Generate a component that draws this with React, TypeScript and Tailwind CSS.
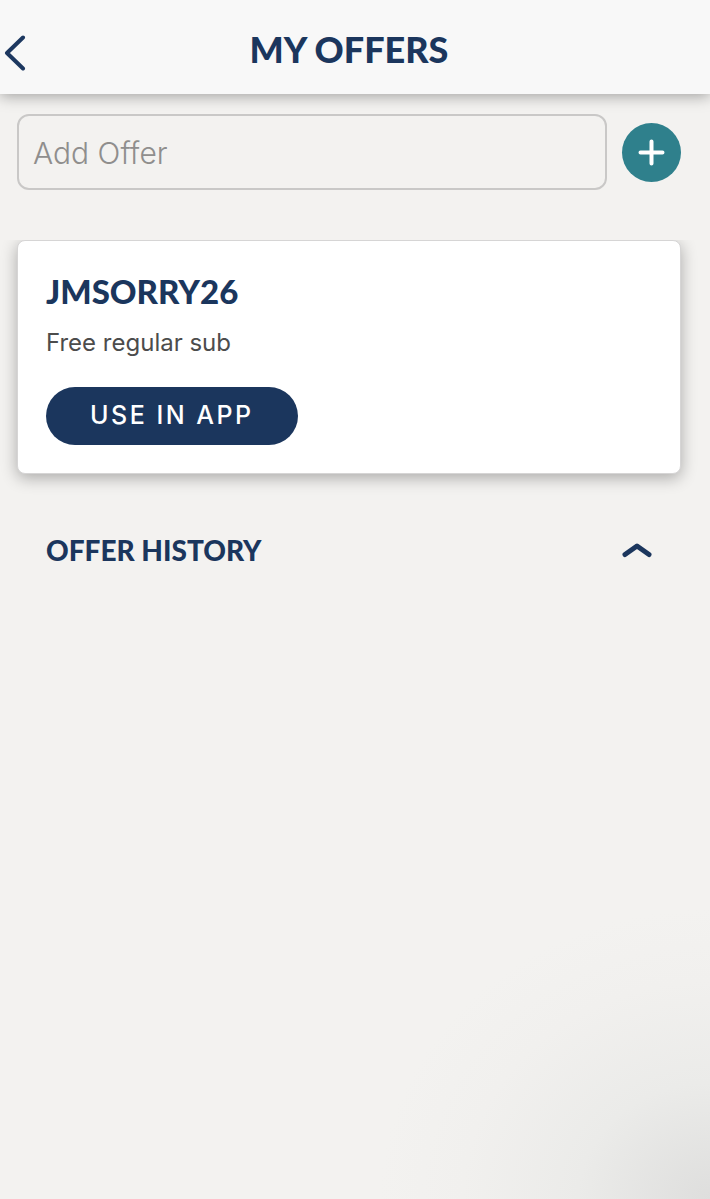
import React, { useState } from 'react';

type Offer = {
  code: string;
  description: string;
};

const offers: Offer[] = [{ code: 'JMSORRY26', description: 'Free regular sub' }];

const Header: React.FC = () => (
  <header className="relative grid h-[94px] grid-cols-[1fr_auto_1fr] items-center bg-[#f8f8f8] pt-3 pr-3 shadow-[0_2px_14px_rgba(0,0,0,0.35)]">
    <button type="button" aria-label="Back" className="justify-self-start pl-1">
      <svg viewBox="0 0 24 36" className="h-9 w-6" fill="none" stroke="#1d3860" strokeWidth="4" strokeLinecap="round" strokeLinejoin="round">
        <path d="M19 2.5 3 18l16 15.5" />
      </svg>
    </button>
    <h1 className="pb-2 font-['Lato_Black','Lato',sans-serif] text-4xl leading-[44px] font-black text-[#1b365d]">MY OFFERS</h1>
  </header>
);

const AddOfferForm: React.FC = () => {
  const [code, setCode] = useState('');

  return (
    <form className="flex items-center gap-[15px] pt-5 pr-[29px] pl-[17px]" onSubmit={(e) => e.preventDefault()}>
      <input
        type="text"
        aria-label="Add Offer"
        placeholder="Add Offer"
        value={code}
        onChange={(e) => setCode(e.target.value)}
        className="h-[76px] min-w-0 flex-1 rounded-xl border-2 border-[#c9c8c7] bg-transparent px-[14px] pt-[2px] text-[30px] font-light text-[#4a4a4a] [font-variant-ligatures:none] placeholder:text-[#8f8e8d]"
      />
      <button type="submit" aria-label="Add" className="flex size-[59px] items-center justify-center rounded-full bg-[#2f808c]">
        <svg viewBox="0 0 27 27" className="size-[27px]" fill="none" stroke="#fff" strokeWidth="4" strokeLinecap="round">
          <path d="M13.5 2.5v22M2.5 13.5h22" />
        </svg>
      </button>
    </form>
  );
};

const OfferCard: React.FC<{ offer: Offer }> = ({ offer }) => (
  <article className="rounded-lg border border-[#d6d5d5] bg-white p-7 shadow-[0_4px_16px_rgba(0,0,0,0.3)]">
    <h2 className="font-['Lato_Black','Lato',sans-serif] text-[33px] leading-[44px] font-black text-[#1b365d]">{offer.code}</h2>
    <p className="mt-[14px] text-2xl text-[#4c4c4c]">{offer.description}</p>
    <button type="button" className="mt-7 h-[58px] rounded-full bg-[#1b365d] px-11 text-[25px] font-medium tracking-widest text-white">
      USE IN APP
    </button>
  </article>
);

export default function App() {
  const [open, setOpen] = useState(true);

  return (
    <div className="min-h-screen bg-[#f3f2f0] bg-[radial-gradient(ellipse_330px_290px_at_bottom_right,#dededd,#ebebe9_40%,#f1f0ee_75%,#f3f2f0)] bg-no-repeat font-['Inter',sans-serif]">
      <Header />
      <main>
        <AddOfferForm />
        {/* overflow-hidden cuts the card shadow off at the top of the list */}
        <section className="mt-[50px] overflow-hidden pr-[29px] pb-8 pl-[17px]">
          {offers.map((offer) => (
            <OfferCard key={offer.code} offer={offer} />
          ))}
        </section>
        <button
          type="button"
          aria-expanded={open}
          onClick={() => setOpen(!open)}
          className="mt-6 flex w-full items-center justify-between pr-[57px] pl-[46px]"
        >
          <span className="font-['Lato_Black','Lato',sans-serif] text-[28px] leading-[40px] font-black text-[#1b365d]">OFFER HISTORY</span>
          <svg viewBox="0 0 32 16" className={open ? 'h-4 w-8' : 'h-4 w-8 rotate-180'} fill="none" stroke="#1b365d" strokeWidth="5" strokeLinecap="round" strokeLinejoin="round">
            <path d="M4 12.5 16 4l12 8.5" />
          </svg>
        </button>
      </main>
    </div>
  );
}
